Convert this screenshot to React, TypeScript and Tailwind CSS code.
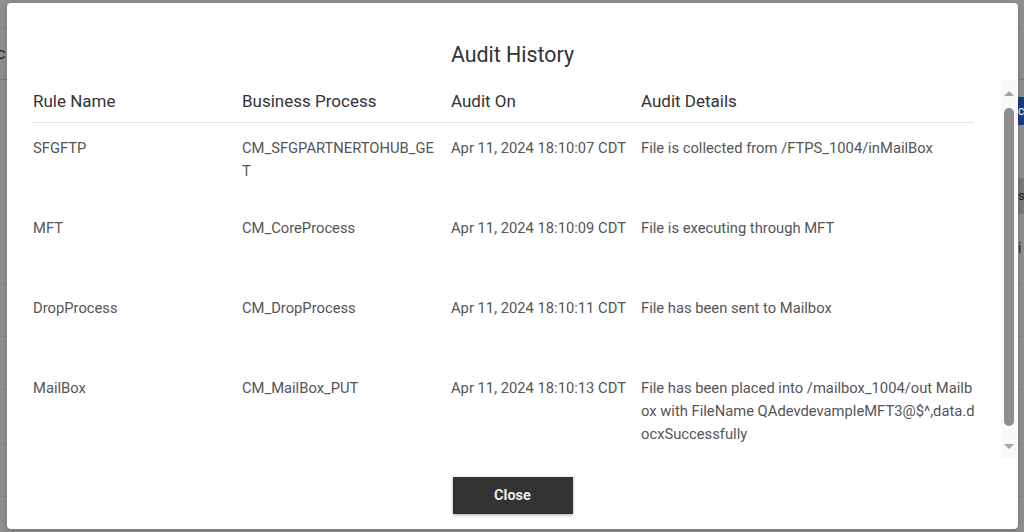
import React from "react";

const rows = [
  {
    rule: "SFGFTP",
    bp: "CM_SFGPARTNERTOHUB_GET",
    on: "Apr 11, 2024 18:10:07 CDT",
    details: "File is collected from /FTPS_1004/inMailBox",
  },
  {
    rule: "MFT",
    bp: "CM_CoreProcess",
    on: "Apr 11, 2024 18:10:09 CDT",
    details: "File is executing through MFT",
  },
  {
    rule: "DropProcess",
    bp: "CM_DropProcess",
    on: "Apr 11, 2024 18:10:11 CDT",
    details: "File has been sent to Mailbox",
  },
  {
    rule: "MailBox",
    bp: "CM_MailBox_PUT",
    on: "Apr 11, 2024 18:10:13 CDT",
    details:
      "File has been placed into /mailbox_1004/out Mailbox with FileName QAdevdevampleMFT3@$^,data.docxSuccessfully",
  },
];

export default function App() {
  return (
    <div
      className="relative w-[1024px] h-[532px] overflow-hidden bg-[#8f8f8f]"
      style={{ fontFamily: "Roboto, 'Noto Sans', sans-serif" }}
    >
      {/* background page (dimmed) */}
      <div className="flex flex-col w-full text-[#1f1f1f]">
        <div className="h-[28px] border-b border-[#858585]" />
        <div className="h-[52px] border-b border-[#7a7a7a] flex items-center justify-between text-[16px]">
          <span className="-ml-[3px]">c</span>
        </div>
        <div className="h-[17px]" />
        <div className="h-[28px] flex justify-end">
          <div className="w-[6px] bg-[#1a3a8a] text-white text-[12px] overflow-hidden leading-[28px]">c</div>
        </div>
        <div className="h-[53px]" />
        <div className="h-[36px] flex justify-end">
          <div className="w-[6px] bg-[#7a7a7a] text-[13px] overflow-hidden leading-[36px]">s</div>
        </div>
        <div className="h-[70px] border-b border-[#858585] flex justify-end items-center">
          <span className="w-[6px] overflow-hidden text-[14px]">i</span>
        </div>
        <div className="h-[53px] border-b border-[#858585]" />
        <div className="h-[53px] border-b border-[#858585]" />
        <div className="h-[54px] border-b border-[#858585]" />
        <div className="h-[53px] border-b border-[#858585]" />
      </div>

      {/* dialog */}
      <div className="absolute left-[7px] top-[3px] w-[1011px] h-[526px] bg-white rounded-[4px] flex flex-col shadow-[0_2px_6px_rgba(0,0,0,0.2)]">
        <div className="pt-[38px] text-center text-[21.4px] leading-[28px] text-[#333]">
          Audit History
        </div>
        <div className="mt-[11px] ml-[26px] mr-[2px] h-[378px] flex overflow-hidden">
          <div className="w-[941px] shrink-0 pt-[6px]">
            <div className="grid grid-cols-[209px_209px_190px_333px] border-b border-[#e5e5e5] pt-[3px] pb-[9px] text-[17px] leading-[24px] text-[#333]">
              <div>Rule Name</div>
              <div>Business Process</div>
              <div>Audit On</div>
              <div>Audit Details</div>
            </div>
            {rows.map((r, i) => (
              <div
                key={i}
                className="grid grid-cols-[209px_209px_190px_336px] min-h-[80px] pt-[14px] pb-[20px] text-[14.75px] leading-[23px] text-[#555]"
              >
                <div className="pr-[14px] break-all">{r.rule}</div>
                <div className="pr-[14px] break-all">{r.bp}</div>
                <div className="pr-[4px]">{r.on}</div>
                <div className="break-all">{r.details}</div>
              </div>
            ))}
          </div>
          {/* scrollbar */}
          <div className="ml-[27px] w-[15px] shrink-0 h-full bg-[#f9f9f9] flex flex-col items-center">
            <div className="h-[18px] mt-[4px] flex items-center justify-center">
              <div className="w-0 h-0 border-l-[5px] border-r-[5px] border-b-[5px] border-l-transparent border-r-transparent border-b-[#a3a3a3]" />
            </div>
            <div className="mt-[6px] w-[10px] h-[318px] rounded-full bg-[#8d8d8d]" />
            <div className="h-[18px] mt-[11px] flex items-center justify-center">
              <div className="w-0 h-0 border-l-[5px] border-r-[5px] border-t-[5px] border-l-transparent border-r-transparent border-t-[#a3a3a3]" />
            </div>
          </div>
        </div>
        <div className="flex justify-center pt-[19px]">
          <button className="w-[120px] h-[37px] bg-[#333] text-[#e8e8e8] text-[14.5px] font-bold shadow-[0_1px_3px_rgba(0,0,0,0.35)]">
            Close
          </button>
        </div>
      </div>
    </div>
  );
}
